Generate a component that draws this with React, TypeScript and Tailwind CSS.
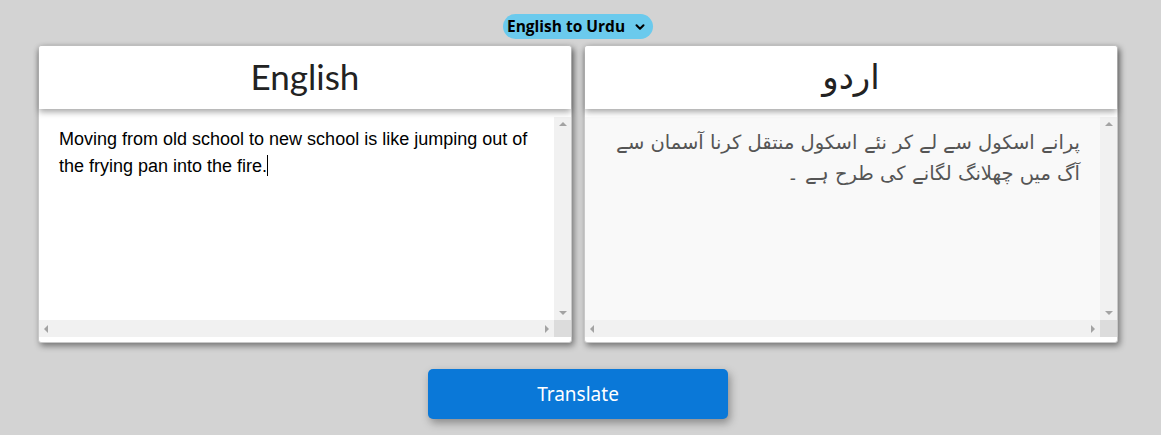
import { ChevronDown } from "lucide-react";

function Scrollbars() {
  return (
    <>
      <div className="absolute right-0 top-0 bottom-[17px] w-[17px] bg-[#f1f1f1] flex flex-col justify-between items-center py-[5px]">
        <div className="w-0 h-0 border-x-[4px] border-x-transparent border-b-[4px] border-b-[#a3a3a3]" />
        <div className="w-0 h-0 border-x-[4px] border-x-transparent border-t-[4px] border-t-[#a3a3a3]" />
      </div>
      <div className="absolute left-0 right-[17px] bottom-0 h-[17px] bg-[#f1f1f1] flex justify-between items-center px-[5px]">
        <div className="w-0 h-0 border-y-[4px] border-y-transparent border-r-[4px] border-r-[#a3a3a3]" />
        <div className="w-0 h-0 border-y-[4px] border-y-transparent border-l-[4px] border-l-[#a3a3a3]" />
      </div>
      <div className="absolute right-0 bottom-0 w-[17px] h-[17px] bg-[#dcdcdc]" />
    </>
  );
}

function Panel({
  title,
  children,
  rtl,
}: {
  title: string;
  children: React.ReactNode;
  rtl?: boolean;
}) {
  return (
    <div className="w-[534px] h-[298px] bg-white rounded-[3px] border border-[#c8c8c8] shadow-[2px_3px_6px_rgba(0,0,0,0.45)] flex flex-col pb-[5px]">
      <div className="h-[63px] shrink-0 bg-white rounded-t-[3px] shadow-[0_3px_6px_rgba(0,0,0,0.35)] flex items-center justify-center relative z-10">
        <h2
          className={`${rtl ? "text-[34px]" : "text-[35px]"} text-[#222] leading-none pb-[2px]`}
          style={{ fontFamily: rtl ? '"DejaVu Sans", sans-serif' : 'Lato, "Noto Sans", sans-serif' }}
        >
          {title}
        </h2>
      </div>
      <div className={`relative mt-[8px] flex-1 ${rtl ? "bg-[#f9f9f9]" : "bg-white"}`}>
        {children}
        <Scrollbars />
      </div>
    </div>
  );
}

export default function App() {
  return (
    <div className="w-[1161px] h-[435px] bg-[#d3d3d3]">
      <div className="w-[1156px] flex flex-col items-center pt-[14px]">
        <div className="w-[150px] h-[25px] rounded-full bg-[#6bcaed] flex items-center justify-between pl-[4px] pr-[6px] text-[15.5px] font-bold text-black font-['Open_Sans',sans-serif]">
          <span>English to Urdu</span>
          <ChevronDown size={14} strokeWidth={3.5} />
        </div>
        <div className="mt-[6px] flex gap-[12px]">
          <Panel title="English">
            <p className="px-[20px] pt-[9px] pr-[30px] text-[18px] leading-[27px] text-black font-['Liberation_Sans',Arial,sans-serif]">
              Moving from old school to new school is like jumping out of the frying pan into the fire.
              <span className="inline-block w-px h-[21px] bg-black align-[-4px]" />
            </p>
          </Panel>
          <Panel title="اردو" rtl>
            <p
              dir="rtl"
              className="pl-[30px] pr-[37px] pt-[10px] text-[19.5px] leading-[31px] text-[#555]"
              style={{ fontFamily: '"DejaVu Sans", "Liberation Sans", sans-serif' }}
            >
              پرانے اسکول سے لے کر نئے اسکول منتقل کرنا آسمان سے آگ میں چھلانگ لگانے کی طرح ہے ۔
            </p>
          </Panel>
        </div>
        <button className="mt-[26px] w-[300px] h-[50px] rounded-[5px] bg-[#0a78d8] text-white text-[19px] shadow-[2px_4px_8px_rgba(0,0,0,0.35)] font-['Noto_Sans',sans-serif]">
          Translate
        </button>
      </div>
    </div>
  );
}
